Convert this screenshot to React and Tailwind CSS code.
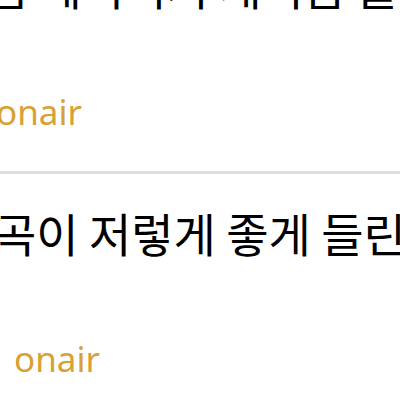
import React from 'react';

const ITEMS = [
  { id: 1, title: '음 데이터지 재이름 을 들으면', titleX: '-ml-[13px]', onairX: '-ml-[4px]' },
  { id: 2, title: '곡이 저렇게 좋게 들린 이유', titleX: '-ml-[6px]', onairX: 'ml-[14px]' },
  { id: 3, title: '오늘 밤 라디오 다시 듣기', titleX: 'ml-[14px]', onairX: 'ml-[14px]' },
];

function Row({ item }) {
  return (
    <div className="overflow-hidden border-b-[3px] border-[#dedede] pt-[28px] pb-[35px]">
      <div
        className={`${item.titleX} whitespace-nowrap font-['Noto_Sans_CJK_KR',sans-serif] text-[46px] leading-[60px] text-black`}
      >
        {item.title}
      </div>
      <div
        className={`${item.onairX} mt-[73px] font-['Noto_Sans','Noto_Sans_CJK_KR',sans-serif] text-[35px] leading-[48px] text-[#d9a035]`}
      >
        onair
      </div>
    </div>
  );
}

export default function App() {
  return (
    <div className="h-[400px] w-[400px] overflow-hidden bg-white">
      <div className="-mt-[73px]">
        {ITEMS.map((item) => (
          <Row key={item.id} item={item} />
        ))}
      </div>
    </div>
  );
}
